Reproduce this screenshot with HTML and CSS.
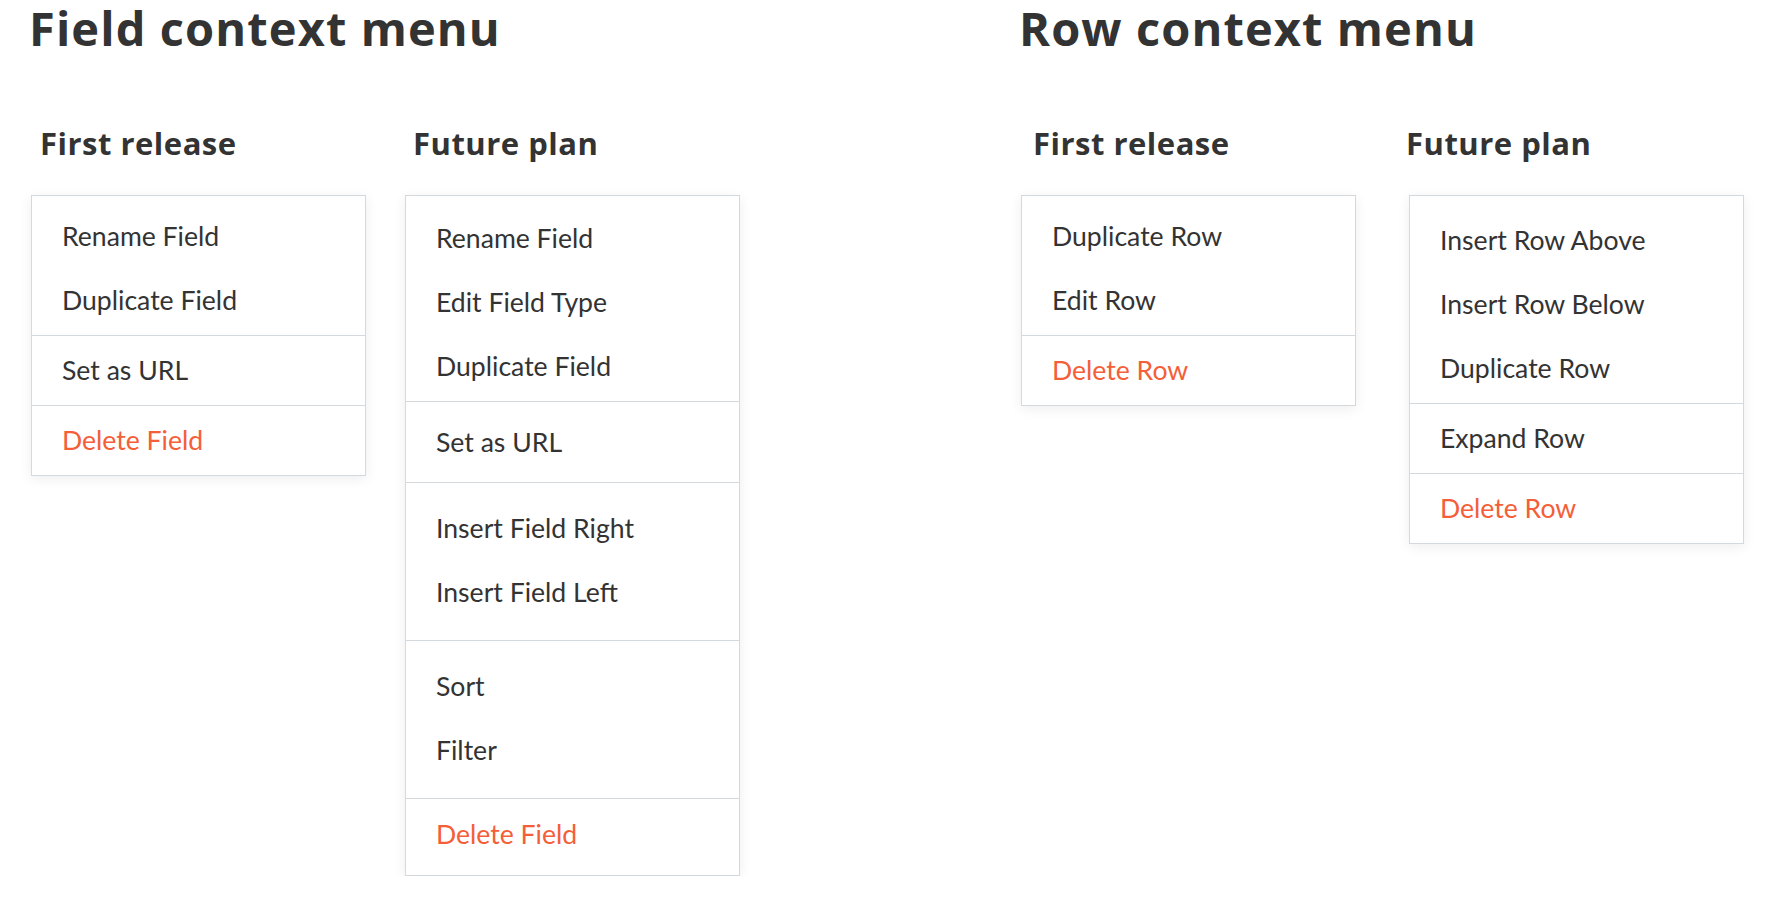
FILE: index.html
```html
<!DOCTYPE html>
<html lang="en">
<head>
<meta charset="utf-8">
<title>Context menus</title>
<link rel="stylesheet" href="styles.css">
</head>
<body>
<main class="page">
  <section class="group group--field">
    <h1 class="group-title">Field context menu</h1>
    <div class="columns columns--field">
      <div class="column">
        <h2 class="column-title">First release</h2>
        <div class="menu">
          <ul class="menu-section menu-section--lead">
            <li class="menu-item">Rename Field</li>
            <li class="menu-item">Duplicate Field</li>
          </ul>
          <ul class="menu-section">
            <li class="menu-item">Set as URL</li>
          </ul>
          <ul class="menu-section">
            <li class="menu-item menu-item--danger">Delete Field</li>
          </ul>
        </div>
      </div>
      <div class="column">
        <h2 class="column-title column-title--tight">Future plan</h2>
        <div class="menu">
          <ul class="menu-section menu-section--lead-lg">
            <li class="menu-item">Rename Field</li>
            <li class="menu-item">Edit Field Type</li>
            <li class="menu-item">Duplicate Field</li>
          </ul>
          <ul class="menu-section menu-section--airy">
            <li class="menu-item">Set as URL</li>
          </ul>
          <ul class="menu-section menu-section--wide">
            <li class="menu-item">Insert Field Right</li>
            <li class="menu-item">Insert Field Left</li>
          </ul>
          <ul class="menu-section menu-section--wide">
            <li class="menu-item">Sort</li>
            <li class="menu-item">Filter</li>
          </ul>
          <ul class="menu-section menu-section--tail">
            <li class="menu-item menu-item--danger">Delete Field</li>
          </ul>
        </div>
      </div>
    </div>
  </section>

  <section class="group group--row">
    <h1 class="group-title">Row context menu</h1>
    <div class="columns columns--row">
      <div class="column">
        <h2 class="column-title column-title--indent">First release</h2>
        <div class="menu">
          <ul class="menu-section menu-section--lead">
            <li class="menu-item">Duplicate Row</li>
            <li class="menu-item">Edit Row</li>
          </ul>
          <ul class="menu-section">
            <li class="menu-item menu-item--danger">Delete Row</li>
          </ul>
        </div>
      </div>
      <div class="column">
        <h2 class="column-title column-title--flush">Future plan</h2>
        <div class="menu">
          <ul class="menu-section menu-section--lead-xl">
            <li class="menu-item">Insert Row Above</li>
            <li class="menu-item">Insert Row Below</li>
            <li class="menu-item">Duplicate Row</li>
          </ul>
          <ul class="menu-section">
            <li class="menu-item">Expand Row</li>
          </ul>
          <ul class="menu-section">
            <li class="menu-item menu-item--danger">Delete Row</li>
          </ul>
        </div>
      </div>
    </div>
  </section>
</main>
</body>
</html>
```

FILE: styles.css
```css
* {
  box-sizing: border-box;
}

html,
body {
  margin: 0;
  padding: 0;
  background: #ffffff;
}

body {
  color: #333333;
  font-family: "Open Sans", "Liberation Sans", sans-serif;
}

.page {
  display: flex;
  align-items: flex-start;
  gap: 281px;
  padding-left: 31px;
}

.group {
  display: flex;
  flex-direction: column;
}

.group-title {
  margin: 5px 0 0 -2px;
  font-family: "Open Sans", "Liberation Sans", sans-serif;
  font-weight: 700;
  font-size: 47px;
  line-height: 47px;
  letter-spacing: 1.1px;
  color: #333333;
  white-space: nowrap;
}

.columns {
  display: flex;
  align-items: flex-start;
  margin-top: 76px;
}

.columns--field {
  gap: 39px;
}

.columns--row {
  gap: 53px;
}

.column {
  display: flex;
  flex-direction: column;
  width: 335px;
}

.column-title {
  margin: 0 0 36px;
  padding-left: 9px;
  font-family: "Open Sans", "Liberation Sans", sans-serif;
  font-weight: 700;
  font-size: 31px;
  line-height: 31px;
  letter-spacing: 0.5px;
  color: #333333;
  white-space: nowrap;
}

.column-title--tight {
  padding-left: 8px;
}

.column-title--indent {
  padding-left: 12px;
}

.column-title--flush {
  padding-left: 0;
  margin-left: -3px;
}

.menu {
  width: 335px;
  background: #ffffff;
  border: 1px solid #d3d9dd;
  box-shadow: 0 3px 12px rgba(0, 0, 0, 0.07);
}

.menu-section {
  list-style: none;
  margin: 0;
  padding: 2px 0 3px;
  border-top: 1px solid #d3d9dd;
}

.menu-section:first-child {
  border-top: 0;
}

.menu-section--lead {
  padding-top: 8px;
}

.menu-section--lead-lg {
  padding: 9.5px 0 3.5px;
}

.menu-section--lead-xl {
  padding: 12px 0 3px;
}

.menu-section--airy {
  padding: 7.5px 0 8.5px;
}

.menu-section--wide {
  padding: 13px 0 16px;
}

.menu-section--tail {
  padding: 2.5px 0 9.5px;
}

.menu-item {
  padding-left: 30px;
  font-family: Lato, "Open Sans", sans-serif;
  font-size: 26.6px;
  line-height: 64px;
  height: 64px;
  color: #333333;
  white-space: nowrap;
}

.menu-item--danger {
  color: #f45e38;
}
```
